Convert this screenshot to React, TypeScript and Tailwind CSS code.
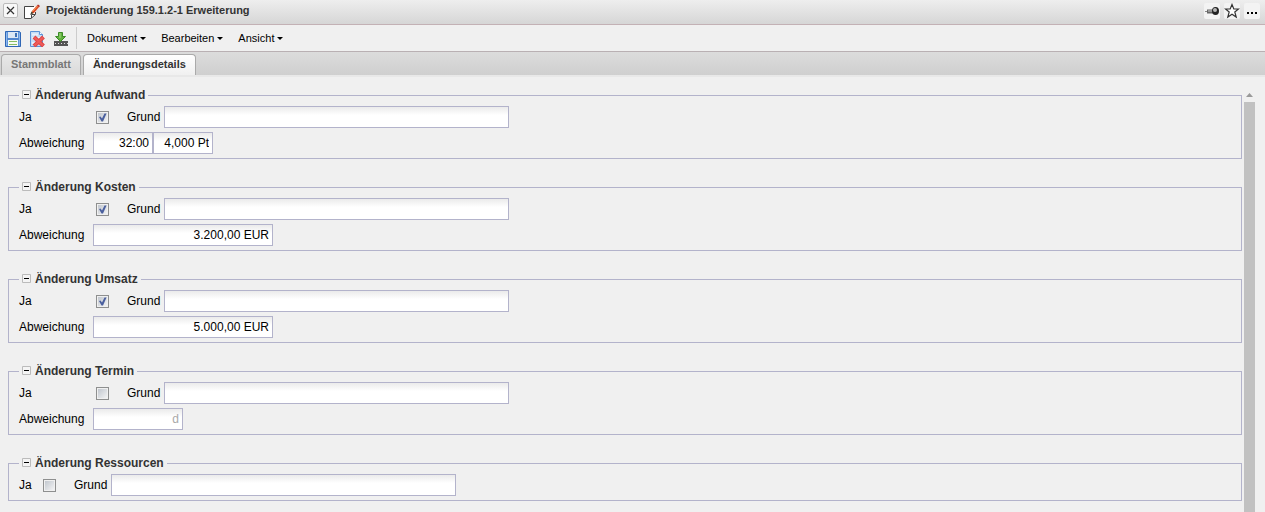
import { useState } from "react";
import type { ReactNode } from "react";

type Amount = {
  value: string;
  className: string;
};

type Section = {
  id: string;
  title: string;
  checked: boolean;
  amounts: Amount[];
};

const sections: Section[] = [
  {
    id: "aufwand",
    title: "Änderung Aufwand",
    checked: true,
    amounts: [
      { value: "32:00", className: "w-[60px] text-black" },
      { value: "4,000 Pt", className: "w-[60px] text-black" },
    ],
  },
  {
    id: "kosten",
    title: "Änderung Kosten",
    checked: true,
    amounts: [{ value: "3.200,00 EUR", className: "w-[180px] text-black" }],
  },
  {
    id: "umsatz",
    title: "Änderung Umsatz",
    checked: true,
    amounts: [{ value: "5.000,00 EUR", className: "w-[180px] text-black" }],
  },
  {
    id: "termin",
    title: "Änderung Termin",
    checked: false,
    amounts: [{ value: "d", className: "w-[90px] text-[#a9a9a9]" }],
  },
  { id: "ressourcen", title: "Änderung Ressourcen", checked: false, amounts: [] },
];

const fieldClass =
  "h-[22px] border border-[#b3b3cb] bg-white bg-linear-to-b from-[#ebebeb] to-white to-40% px-[3px] text-xs outline-none";

function EditIcon() {
  return (
    <svg width="16" height="16" viewBox="0 0 16 16" fill="none">
      <path d="M.5 2.500h11v8l-4 4h-7z" fill="#fff" />
      <path d="M10 2.500H.5v12h6.500l4.500-4V8M7.500 14v-3.500H11" stroke="#444" />
      <path d="M7 10l1-3 5-5.500 2 1.500-5 6z" fill="#e0461f" />
      <path d="M8.500 7.500l5-5.500" stroke="#f59a5c" />
      <path d="M6 11l1.500-3.500 2 1.500z" fill="#443" />
      <path d="M13 1.500l1-1L16 2l-1 1.200z" fill="#b02a20" />
    </svg>
  );
}

function SaveIcon() {
  return (
    <svg width="16" height="16" viewBox="0 0 16 16" fill="none">
      <path d="M.5.500h14l1 1v14H.5z" fill="#5f95dc" stroke="#2f66b5" />
      <path d="M1.500 1.500v13M14.500 2v12.500" stroke="#8db8ec" />
      <path d="M3 1h10v6H3z" fill="#dce8f5" />
      <path d="M10 2h2v4h-2z" fill="#3f72b5" />
      <path d="M2 8h12" stroke="#4276c0" />
      <path d="M3 9h10v6H3z" fill="#f6faf2" />
      <path d="M4 10.500h8M4 13.500h8" stroke="#86bd62" />
    </svg>
  );
}

function DeleteIcon() {
  return (
    <svg width="16" height="16" viewBox="0 0 16 16" fill="none">
      <path d="M1.500.500h9l3 3v12h-12z" fill="#c6ddf6" stroke="#5b93d8" />
      <path d="M10.500.500v3h3" fill="#fff" stroke="#5b93d8" />
      <path d="M3 3.500h6M3 7h8M3 12h7" stroke="#e8f2fc" strokeWidth="2" />
      <path d="M5 6l9.500 9M14.500 6L5 15" stroke="#e04545" strokeWidth="4" />
      <path d="M5.500 6.500l8.500 8M14 6.500l-8.500 8" stroke="#ee5c5a" strokeWidth="2" />
    </svg>
  );
}

function ImportIcon() {
  return (
    <svg width="16" height="16" viewBox="0 0 16 16" fill="none">
      <path d="M1 10h14v5H1z" fill="#555" />
      <path d="M2 12.500h13" stroke="#ddd" strokeDasharray="1 2" />
      <path d="M5.500 1.500h4v4h3l-5 5-5-5h3z" fill="#62b33f" stroke="#3b8a27" />
      <path d="M7 2v5" stroke="#a5dc83" />
    </svg>
  );
}

function PinIcon() {
  return (
    <svg width="16" height="16" viewBox="0 0 16 16" fill="none">
      <path d="M1 8.500h4" stroke="#888" />
      <path d="M3 6.500h6v4H3z" fill="#666" />
      <path d="M4 8h5" stroke="#ccc" />
      <ellipse cx="11.500" cy="8" rx="3.500" ry="4" fill="#222" />
      <ellipse cx="11" cy="7" rx="2" ry="2" fill="#b5b5b5" />
    </svg>
  );
}

function StarIcon() {
  return (
    <svg width="16" height="16" viewBox="0 0 16 16" fill="none">
      <path
        d="M8 1.500l1.800 4.500h4.700l-3.700 3 1.400 5L8 11.200 3.800 14l1.400-5-3.700-3h4.700z"
        fill="#fff"
        stroke="#333"
        strokeWidth="1.200"
      />
    </svg>
  );
}

function IconButton({ label, children }: { label: string; children: ReactNode }) {
  return (
    <button type="button" aria-label={label} className="flex size-4 items-center justify-center rounded-xs bg-[#f3f3f3]">
      {children}
    </button>
  );
}

function ToolButton({ label, children }: { label: string; children: ReactNode }) {
  return (
    <button type="button" aria-label={label} className="size-4">
      {children}
    </button>
  );
}

function MenuButton({ label }: { label: string }) {
  return (
    <button type="button" className="flex items-center gap-[3px] text-[11px] text-black">
      {label}
      <svg width="6" height="3" viewBox="0 0 6 3">
        <path d="M0 0h6L3 3z" />
      </svg>
    </button>
  );
}

function CheckBox({ id, defaultChecked }: { id: string; defaultChecked: boolean }) {
  return (
    <span className="relative block size-[13px] shrink-0">
      <input
        id={id}
        type="checkbox"
        defaultChecked={defaultChecked}
        className="peer block size-[13px] appearance-none border border-[#8e8f8f] bg-linear-to-br from-[#bcc2ca] to-[#f8f8f8] bg-clip-content p-px"
      />
      <svg
        width="13"
        height="13"
        viewBox="0 0 13 13"
        fill="none"
        className="pointer-events-none absolute inset-0 hidden peer-checked:block"
      >
        <path d="M3 6l1.500-.5L6 7.500 8.500 2.500h2L7 10.500H5.500z" fill="#4a5f9e" />
      </svg>
    </span>
  );
}

function ChangeSection({ section }: { section: Section }) {
  const [open, setOpen] = useState(true);
  const { id, title, checked, amounts } = section;

  return (
    <fieldset className={`min-w-0 border border-[#b3b3cb] px-2.5 ${open ? "pb-1" : ""}`}>
      <legend className="px-[3px]">
        <button
          type="button"
          aria-expanded={open}
          onClick={() => setOpen(!open)}
          className="flex h-[15px] items-center gap-1 text-xs leading-[15px] font-bold text-[#333]"
        >
          <svg width="9" height="9" viewBox="0 0 9 9" fill="none" className="mb-0.5">
            <path d="M.5.500h8v8h-8z" fill="#f4f4f4" stroke="#bbb" />
            <path d={open ? "M2 4.500h5" : "M2 4.500h5M4.500 2v5"} stroke="#000" />
          </svg>
          {title}
        </button>
      </legend>
      {open && (
        <div className="flex flex-col gap-1 pt-[3px]">
          <div className="flex items-center">
            <label htmlFor={`${id}-ja`} className={amounts.length > 0 ? "w-[77px]" : "w-6"}>
              Ja
            </label>
            <CheckBox id={`${id}-ja`} defaultChecked={checked} />
            <label htmlFor={`${id}-grund`} className="mr-1 ml-[18px]">
              Grund
            </label>
            <input id={`${id}-grund`} type="text" className={`${fieldClass} w-[345px] text-black`} />
          </div>
          {amounts.length > 0 && (
            <div className="flex items-center">
              <label htmlFor={`${id}-abweichung-0`} className="w-[74px]">
                Abweichung
              </label>
              {amounts.map((amount, i) => (
                <input
                  key={i}
                  id={`${id}-abweichung-${i}`}
                  aria-label={i > 0 ? "Abweichung in Personentagen" : undefined}
                  type="text"
                  defaultValue={amount.value}
                  className={`${fieldClass} text-right ${amount.className}`}
                />
              ))}
            </div>
          )}
        </div>
      )}
    </fieldset>
  );
}

export default function App() {
  return (
    <div className="flex h-screen flex-col overflow-hidden bg-[#f0f0f0] font-['Liberation_Sans',Arial,sans-serif] text-xs text-black">
      <header className="flex h-[25px] shrink-0 items-center border-b border-[#c3b1b5] bg-linear-to-b from-[#eeeeee] to-[#d6d6d6] px-[3px] pb-1">
        <button
          type="button"
          aria-label="Schließen"
          className="flex size-[15px] items-center justify-center rounded-xs border border-[#bbb] bg-[#f8f8f8]"
        >
          <svg width="9" height="9" viewBox="0 0 9 9" fill="none">
            <path d="M1 1l7 7M8 1L1 8" stroke="#333" strokeWidth="1.200" />
          </svg>
        </button>
        <span className="mr-1.5 ml-1.5 pt-1">
          <EditIcon />
        </span>
        <h1 className="text-[11px] font-bold text-[#333]">Projektänderung 159.1.2-1 Erweiterung</h1>
        <div className="ml-auto flex gap-1 pt-0.5 pr-0.5">
          <IconButton label="Anheften">
            <PinIcon />
          </IconButton>
          <IconButton label="Favorit">
            <StarIcon />
          </IconButton>
          <IconButton label="Mehr">
            <svg width="16" height="16" viewBox="0 0 16 16">
              <path d="M3 9h2v2H3zM7 9h2v2H7zM11 9h2v2h-2z" />
            </svg>
          </IconButton>
        </div>
      </header>

      <div className="flex h-[27px] shrink-0 items-center border-b border-[#b9b0b3] bg-[#f0f0f0] pl-[5px]">
        <div className="flex gap-2 pt-0.5">
          <ToolButton label="Speichern">
            <SaveIcon />
          </ToolButton>
          <ToolButton label="Löschen">
            <DeleteIcon />
          </ToolButton>
          <ToolButton label="Importieren">
            <ImportIcon />
          </ToolButton>
        </div>
        <div className="ml-[7px] h-[22px] w-px bg-[#ccc]" />
        <nav className="ml-2.5 flex gap-[15px]">
          <MenuButton label="Dokument" />
          <MenuButton label="Bearbeiten" />
          <MenuButton label="Ansicht" />
        </nav>
      </div>

      <div
        role="tablist"
        className="flex h-[25px] shrink-0 items-end gap-0.5 border-b-2 border-[#e8e8e8] bg-linear-to-b from-[#dcdcdc] to-[#cfcfcf] pl-px text-[11px] font-bold"
      >
        <button
          type="button"
          role="tab"
          aria-selected="false"
          className="h-[21px] rounded-t-sm border border-b-0 border-[#aaa] bg-linear-to-b from-[#e8e8e8] to-[#dadada] px-[9px] pb-0.5 text-[#777]"
        >
          Stammblatt
        </button>
        <button
          type="button"
          role="tab"
          aria-selected="true"
          className="h-[21px] rounded-t-sm border border-b-0 border-[#aaa] bg-linear-to-b from-white to-[#f0f0f0] px-[9px] pb-0.5 text-[#333]"
        >
          Änderungsdetails
        </button>
      </div>

      <main className="flex min-h-0 flex-1 pt-[11px] pr-2.5 pl-2">
        <div className="flex min-w-0 flex-1 flex-col gap-[21px] overflow-hidden">
          {sections.map((section) => (
            <ChangeSection key={section.id} section={section} />
          ))}
        </div>
        <div className="ml-0.5 flex w-[11px] flex-col items-center pt-[5px]">
          <svg width="7" height="4" viewBox="0 0 7 4">
            <path d="M0 4h7L3.500 0z" fill="#999" />
          </svg>
          <div className="mt-[5px] w-full flex-1 bg-[#c1c1c1]" />
        </div>
      </main>
    </div>
  );
}
